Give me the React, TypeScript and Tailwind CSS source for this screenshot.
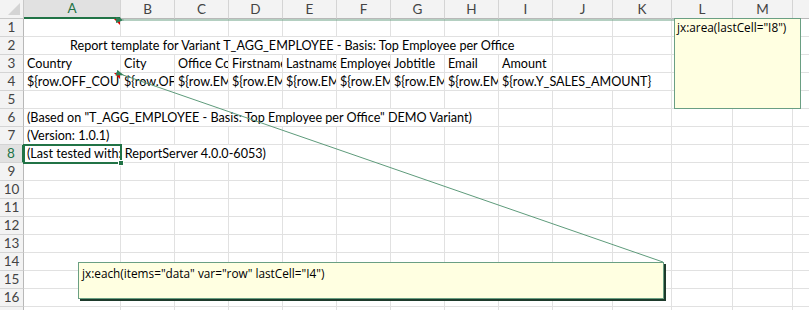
import React from 'react'

const COLS = ['A', 'B', 'C', 'D', 'E', 'F', 'G', 'H', 'I', 'J', 'K', 'L', 'M', 'N']

type Cell = { text?: string; span?: number; clip?: boolean; indent?: boolean; note?: boolean }

const spanClass: Record<number, string> = {
  1: 'col-span-1',
  3: 'col-span-3',
  4: 'col-span-4',
  8: 'col-span-8',
  9: 'col-span-9',
}

// fill a row up to 14 columns with empty cells
function fill(cells: Cell[]): Cell[] {
  const used = cells.reduce((n, c) => n + (c.span ?? 1), 0)
  return [...cells, ...Array.from({ length: COLS.length - used }, () => ({}))]
}

const sheet: Cell[][] = [
  fill([{ note: true }]),
  fill([{ text: 'Report template for Variant T_AGG_EMPLOYEE - Basis: Top Employee per Office', span: 9, indent: true }]),
  fill([
    { text: 'Country', clip: true },
    { text: 'City', clip: true },
    { text: 'Office Country', clip: true },
    { text: 'Firstname', clip: true },
    { text: 'Lastname', clip: true },
    { text: 'Employee No', clip: true },
    { text: 'Jobtitle', clip: true },
    { text: 'Email', clip: true },
    { text: 'Amount', clip: true },
  ]),
  fill([
    { text: '${row.OFF_COUNTRY}', clip: true, note: true },
    { text: '${row.OFF_CITY}', clip: true },
    { text: '${row.EMP_OFFICE}', clip: true },
    { text: '${row.EMP_FIRSTNAME}', clip: true },
    { text: '${row.EMP_LASTNAME}', clip: true },
    { text: '${row.EMP_EMPLOYEENUMBER}', clip: true },
    { text: '${row.EMP_JOBTITLE}', clip: true },
    { text: '${row.EMP_EMAIL}', clip: true },
    { text: '${row.Y_SALES_AMOUNT}', span: 3 },
  ]),
  fill([]),
  fill([{ text: '(Based on "T_AGG_EMPLOYEE - Basis: Top Employee per Office" DEMO Variant)', span: 8 }]),
  fill([{ text: '(Version: 1.0.1)' }]),
  fill([{ text: '(Last tested with: ReportServer 4.0.0-6053)', span: 4 }]),
  ...Array.from({ length: 9 }, () => fill([])),
]

export default function App() {
  return (
    <div className="relative w-[809px] h-[310px] overflow-hidden bg-white font-['Lato','Open_Sans',sans-serif] text-[12.6px] text-black">
      <div className="grid w-[853px] grid-cols-[24px_97px_repeat(8,54px)_60px_59px_61px_60px_60px] grid-rows-[19px_repeat(17,18px)]">
        {/* corner */}
        <div className="relative bg-[#f3f3f3] border-r border-b border-[#c8c8c8]">
          <div className="absolute right-[3px] bottom-[3px] w-0 h-0 border-l-[12px] border-l-transparent border-b-[12px] border-b-[#d4d4d4]" />
        </div>
        {COLS.map((c, i) => (
          <div
            key={c}
            className={
              i === 0
                ? 'flex items-center justify-center bg-[#e1e1e1] text-[#217346] text-[13.5px] border-r border-[#d4d4d4] border-b-2 border-b-[#217346]'
                : 'flex items-center justify-center bg-[#f3f3f3] text-[#444] text-[13.5px] border-r border-[#d4d4d4] border-b border-b-[#b8b8b8]'
            }
          >
            {i < 13 ? c : ''}
          </div>
        ))}

        {[...sheet, fill([])].map((row, r) => (
          <React.Fragment key={r}>
            <div
              className={
                r === 7
                  ? 'flex items-center justify-center bg-[#e1e1e1] text-[#217346] text-[13.5px] border-r-2 border-r-[#217346] border-b border-[#d4d4d4]'
                  : 'flex items-center justify-center bg-[#f3f3f3] text-[#444] text-[13.5px] border-r border-r-[#b8b8b8] border-b border-[#d4d4d4]'
              }
            >
              {r + 1}
            </div>
            {row.map((cell, i) => (
              <div
                key={i}
                className={`relative flex items-center whitespace-nowrap border-r border-b border-[#e1e1e1] leading-[18px] ${
                  spanClass[cell.span ?? 1]
                } ${cell.clip ? 'overflow-hidden pl-[3px]' : cell.indent ? 'pl-[46px]' : 'pl-[3px]'}`}
              >
                {cell.text}
                {cell.note && (
                  <div className="absolute top-0 right-0 w-0 h-0 border-l-[6px] border-l-transparent border-t-[6px] border-t-[#e00000]" />
                )}
              </div>
            ))}
          </React.Fragment>
        ))}
      </div>

      {/* selection on A8 */}
      <div className="absolute left-[23px] top-[144px] w-[99px] h-[20px] border-2 border-[#217346]">
        <div className="absolute -right-[4px] -bottom-[4px] w-[6px] h-[6px] bg-[#217346] border border-white" />
      </div>

      {/* comment arrows */}
      <svg className="absolute inset-0 pointer-events-none" width="809" height="310">
        <defs>
          <marker id="ah" markerWidth="8" markerHeight="6" refX="1" refY="3" orient="auto" markerUnits="userSpaceOnUse">
            <path d="M8,0 L0,3 L8,6 Z" fill="#2f7d55" />
          </marker>
        </defs>
        <line x1="674" y1="20" x2="123" y2="20" stroke="#6a9f83" strokeWidth="1.2" markerEnd="url(#ah)" />
        <line x1="663" y1="262" x2="123" y2="75" stroke="#5e9b7b" strokeWidth="1" markerEnd="url(#ah)" />
      </svg>

      {/* comment boxes */}
      <div className="absolute left-[674px] top-[18px] w-[127px] h-[91px] bg-[#ffffe1] border border-[#6a9f83] px-[2px] text-[11.8px] leading-[16px] font-['Open_Sans',sans-serif]">
        jx:area(lastCell="I8")
      </div>
      <div className="absolute left-[78px] top-[262px] w-[586px] h-[37px] bg-[#ffffe1] border border-[#6a9f83] shadow-[2px_2px_0_#1d3b2b] px-[3px] pt-[2px] text-[11.8px] leading-[16px] font-['Open_Sans',sans-serif]">
        jx:each(items="data" var="row" lastCell="I4")
      </div>
    </div>
  )
}
